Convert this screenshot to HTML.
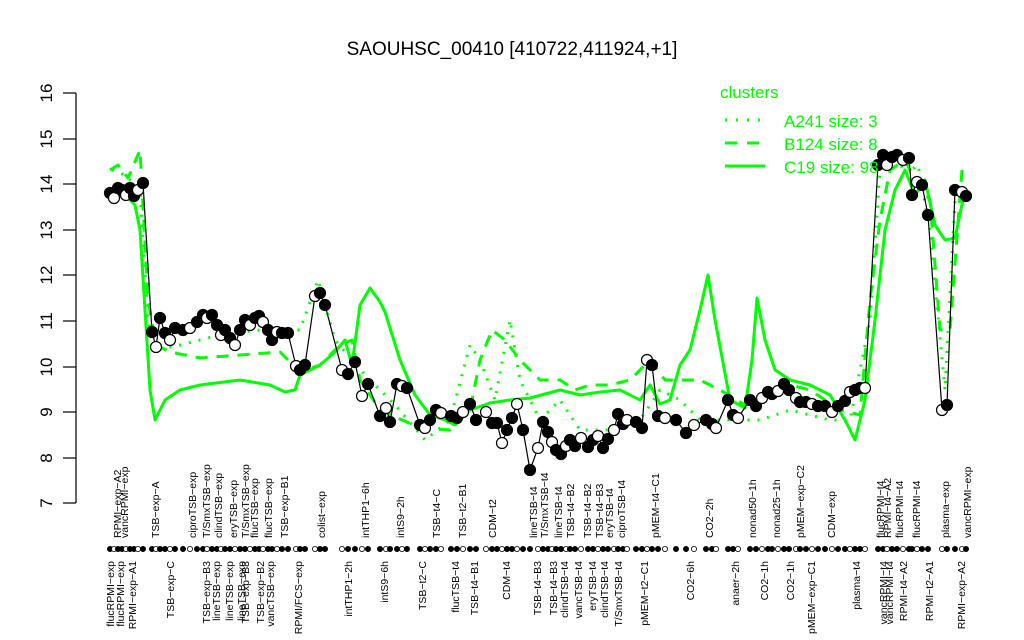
<!DOCTYPE html>
<html><head><meta charset="utf-8"><style>
html,body{margin:0;padding:0;background:#fff;}
svg{display:block;font-family:"Liberation Sans",sans-serif;}
.tl{font-size:10.5px;fill:#000;}
</style></head><body>
<svg width="1024" height="640" viewBox="0 0 1024 640" xmlns="http://www.w3.org/2000/svg">
<text x="512" y="55" text-anchor="middle" font-size="19">SAOUHSC_00410 [410722,411924,+1]</text>
<!-- y axis -->
<g stroke="#000" stroke-width="1.2" fill="none">
<line x1="76" y1="93" x2="76" y2="503"/>
<line x1="63" y1="93" x2="76" y2="93"/><line x1="63" y1="139" x2="76" y2="139"/><line x1="63" y1="184" x2="76" y2="184"/><line x1="63" y1="230" x2="76" y2="230"/><line x1="63" y1="275" x2="76" y2="275"/><line x1="63" y1="321" x2="76" y2="321"/><line x1="63" y1="367" x2="76" y2="367"/><line x1="63" y1="412" x2="76" y2="412"/><line x1="63" y1="458" x2="76" y2="458"/><line x1="63" y1="503" x2="76" y2="503"/>
</g>
<g font-size="17" text-anchor="middle">
<text transform="translate(52,93) rotate(-90)">16</text>
<text transform="translate(52,139) rotate(-90)">15</text>
<text transform="translate(52,184) rotate(-90)">14</text>
<text transform="translate(52,230) rotate(-90)">13</text>
<text transform="translate(52,275) rotate(-90)">12</text>
<text transform="translate(52,321) rotate(-90)">11</text>
<text transform="translate(52,367) rotate(-90)">10</text>
<text transform="translate(52,412) rotate(-90)">9</text>
<text transform="translate(52,458) rotate(-90)">8</text>
<text transform="translate(52,503) rotate(-90)">7</text>
</g>
<!-- clusters -->
<g fill="none" stroke="#00ff00" stroke-width="3" stroke-linejoin="round">
<polyline points="110,200 125,195 135,205 140,230 150,390 155,420 165,400 180,390 200,385 240,380 270,385 285,392 295,390 300,375 320,365 335,352 345,340 352,365 360,305 370,288 380,302 385,312 400,360 415,395 430,415 445,420 455,425 470,410 490,403 510,400 530,398 560,390 580,395 600,392 620,390 640,400 650,385 660,404 670,400 680,365 690,350 700,310 708,275 715,320 730,400 745,408 752,360 757,298 765,340 775,370 790,380 810,385 830,395 845,420 855,440 865,400 875,320 885,230 895,190 905,170 915,195 925,180 935,225 945,240 955,238 965,190"/>
<polyline stroke-dasharray="12,9" points="110,170 118,165 128,178 140,150 148,300 156,345 170,352 200,358 240,355 280,352 300,372 320,365 340,345 352,340 360,380 380,410 420,428 450,430 470,410 480,360 492,330 505,340 520,360 540,380 560,380 575,390 590,385 610,385 630,380 650,360 665,380 700,380 720,390 745,405 760,395 790,385 810,390 840,410 860,415 870,300 880,220 890,170 905,160 915,180 930,200 940,330 950,330 962,170"/>
<polyline stroke-dasharray="2,8" points="112,170 125,175 140,190 148,320 156,350 180,345 220,335 260,330 300,330 318,280 335,340 352,360 370,380 395,405 425,440 450,420 470,345 480,360 495,400 510,320 520,380 540,420 560,400 580,430 610,430 640,420 660,390 680,400 700,420 730,420 760,420 790,410 830,420 850,420 870,320 880,170 895,150 905,175 918,165 930,230 945,390 955,200"/>
</g>
<!-- data -->
<polyline fill="none" stroke="#000" stroke-width="1.2" points="110,193 114,198 118,188 122,190 126,195 130,188 134,196 138,190 143,183 152,332 156,347 160,318 165,333 170,340 175,328 183,330 190,328 197,322 203,315 207,318 212,315 217,325 221,335 225,330 230,338 235,345 240,330 245,320 250,325 255,318 259,316 263,322 268,330 272,340 277,332 282,333 288,333 296,366 300,370 305,365 315,296 320,293 325,305 342,370 348,374 355,362 362,396 368,384 380,416 386,408 390,422 397,384 402,386 407,388 420,425 425,428 430,420 436,410 441,413 451,416 457,418 463,412 470,404 476,420 486,412 492,423 497,423 502,443 507,430 512,418 517,404 523,430 530,470 538,448 543,422 548,432 552,442 556,450 561,454 566,446 570,440 575,446 581,438 588,447 593,440 598,436 603,448 608,439 614,430 618,414 623,424 627,420 636,422 642,428 647,360 652,365 658,416 665,418 676,420 686,433 694,425 706,420 712,424 716,428 728,400 733,415 738,418 750,400 756,406 762,398 768,392 772,394 778,391 784,384 789,390 796,398 800,402 806,402 812,404 818,406 825,406 832,412 838,406 845,401 850,392 855,390 860,388 865,388 878,165 883,155 887,165 892,157 897,155 903,160 909,158 912,195 917,182 922,185 928,215 942,410 947,405 955,190 962,192 966,196"/>
<g stroke="#000" stroke-width="1.2" id="pts"></g>
<!-- legend -->
<g fill="#00ff00" font-size="17">
<text x="720" y="98">clusters</text>
<text x="784" y="127">A241 size: 3</text>
<text x="784" y="150">B124 size: 8</text>
<text x="784" y="173">C19 size: 98</text>
</g>
<g stroke="#00ff00" stroke-width="3">
<line x1="725" y1="120" x2="765" y2="120" stroke-dasharray="2,9"/>
<line x1="725" y1="143" x2="765" y2="143" stroke-dasharray="12,10"/>
<line x1="725" y1="166" x2="765" y2="166"/>
</g>
<g id="dots"></g>
<g class="tl" id="labs"></g>
<script>
var P=[[110,193],[114,198],[118,188],[122,190],[126,195],[130,188],[134,196],[138,190],[143,183],[152,332],[156,347],[160,318],[165,333],[170,340],[175,328],[183,330],[190,328],[197,322],[203,315],[207,318],[212,315],[217,325],[221,335],[225,330],[230,338],[235,345],[240,330],[245,320],[250,325],[255,318],[259,316],[263,322],[268,330],[272,340],[277,332],[282,333],[288,333],[296,366],[300,370],[305,365],[315,296],[320,293],[325,305],[342,370],[348,374],[355,362],[362,396],[368,384],[380,416],[386,408],[390,422],[397,384],[402,386],[407,388],[420,425],[425,428],[430,420],[436,410],[441,413],[451,416],[457,418],[463,412],[470,404],[476,420],[486,412],[492,423],[497,423],[502,443],[507,430],[512,418],[517,404],[523,430],[530,470],[538,448],[543,422],[548,432],[552,442],[556,450],[561,454],[566,446],[570,440],[575,446],[581,438],[588,447],[593,440],[598,436],[603,448],[608,439],[614,430],[618,414],[623,424],[627,420],[636,422],[642,428],[647,360],[652,365],[658,416],[665,418],[676,420],[686,433],[694,425],[706,420],[712,424],[716,428],[728,400],[733,415],[738,418],[750,400],[756,406],[762,398],[768,392],[772,394],[778,391],[784,384],[789,390],[796,398],[800,402],[806,402],[812,404],[818,406],[825,406],[832,412],[838,406],[845,401],[850,392],[855,390],[860,388],[865,388],[878,165],[883,155],[887,165],[892,157],[897,155],[903,160],[909,158],[912,195],[917,182],[922,185],[928,215],[942,410],[947,405],[955,190],[962,192],[966,196]];
var ns="http://www.w3.org/2000/svg",g=document.getElementById("pts"),d=document.getElementById("dots");
P.forEach(function(p,i){var f=(i%3==1)?"#fff":"#000";
var c=document.createElementNS(ns,"circle");c.setAttribute("cx",p[0]);c.setAttribute("cy",p[1]);c.setAttribute("r",5.5);c.setAttribute("fill",f);g.appendChild(c);
var e=document.createElementNS(ns,"circle");e.setAttribute("cx",p[0]);e.setAttribute("cy",549);e.setAttribute("r",2.6);e.setAttribute("fill",f);e.setAttribute("stroke","#000");e.setAttribute("stroke-width","0.8");d.appendChild(e);});
var T=[[117,"RPMI−exp−A2"],[124,"vancRPMI−exp"],[155,"TSB−exp−A"],[192,"ciproTSB−exp"],[206,"T/SmxTSB−exp"],[218,"clindTSB−exp"],[233,"eryTSB−exp"],[245,"T/SmxTSB−exp"],[254,"flucTSB−exp"],[268,"flucTSB−exp"],[284,"TSB−exp−B1"],[321,"colist−exp"],[365,"intTHP1−6h"],[400,"intS9−2h"],[436,"TSB−t4−C"],[462,"TSB−t2−B1"],[492,"CDM−t2"],[533,"lineTSB−t4"],[544,"T/SmxTSB−t4"],[558,"lineTSB−t4"],[570,"TSB−t4−B2"],[587,"TSB−t4−B2"],[599,"TSB−t4−B3"],[609,"eryTSB−t4"],[621,"ciproTSB−t4"],[655,"pMEM−t4−C1"],[709,"CO2−2h"],[752,"nonad50−1h"],[776,"nonad25−1h"],[800,"pMEM−exp−C2"],[831,"CDM−exp"],[880,"flucRPMI−t4"],[887,"RPMI−t4−A2"],[899,"flucRPMI−t4"],[916,"flucRPMI−t4"],[945,"plasma−exp"],[967,"vancRPMI−exp"]];
var B=[[110,"flucRPMI−exp"],[120,"flucRPMI−exp"],[132,"RPMI−exp−A1"],[170,"TSB−exp−C"],[206,"TSB−exp−B3"],[216,"lineTSB−exp"],[229,"lineTSB−exp"],[241,"lineTSB−exp"],[245,"TSB−exp−B3"],[260,"TSB−exp−B2"],[270,"vancTSB−exp"],[298,"RPMI/FCS−exp"],[348,"intTHP1−2h"],[384,"intS9−6h"],[422,"TSB−t2−C"],[455,"flucTSB−t4"],[474,"TSB−t4−B1"],[506,"CDM−t4"],[537,"TSB−t4−B3"],[553,"TSB−t4−B3"],[564,"clindTSB−t4"],[578,"vancTSB−t4"],[592,"eryTSB−t4"],[604,"clindTSB−t4"],[618,"T/SmxTSB−t4"],[644,"pMEM−t2−C1"],[690,"CO2−6h"],[735,"anaer−2h"],[764,"CO2−1h"],[790,"CO2−1h"],[811,"pMEM−exp−C1"],[856,"plasma−t4"],[883,"vancRPMI−t4"],[889,"vancRPMI−t4"],[903,"RPMI−t4−A2"],[929,"RPMI−t2−A1"],[961,"RPMI−exp−A2"]];
var L=document.getElementById("labs");
function add(x,y,s,a){var t=document.createElementNS(ns,"text");t.setAttribute("transform","translate("+(x+4)+","+y+") rotate(-90)");t.setAttribute("text-anchor",a);t.textContent=s;L.appendChild(t);}
T.forEach(function(t){add(t[0],538,t[1],"start");});
B.forEach(function(t){add(t[0],561,t[1],"end");});
</script>
</svg>
</body></html>
